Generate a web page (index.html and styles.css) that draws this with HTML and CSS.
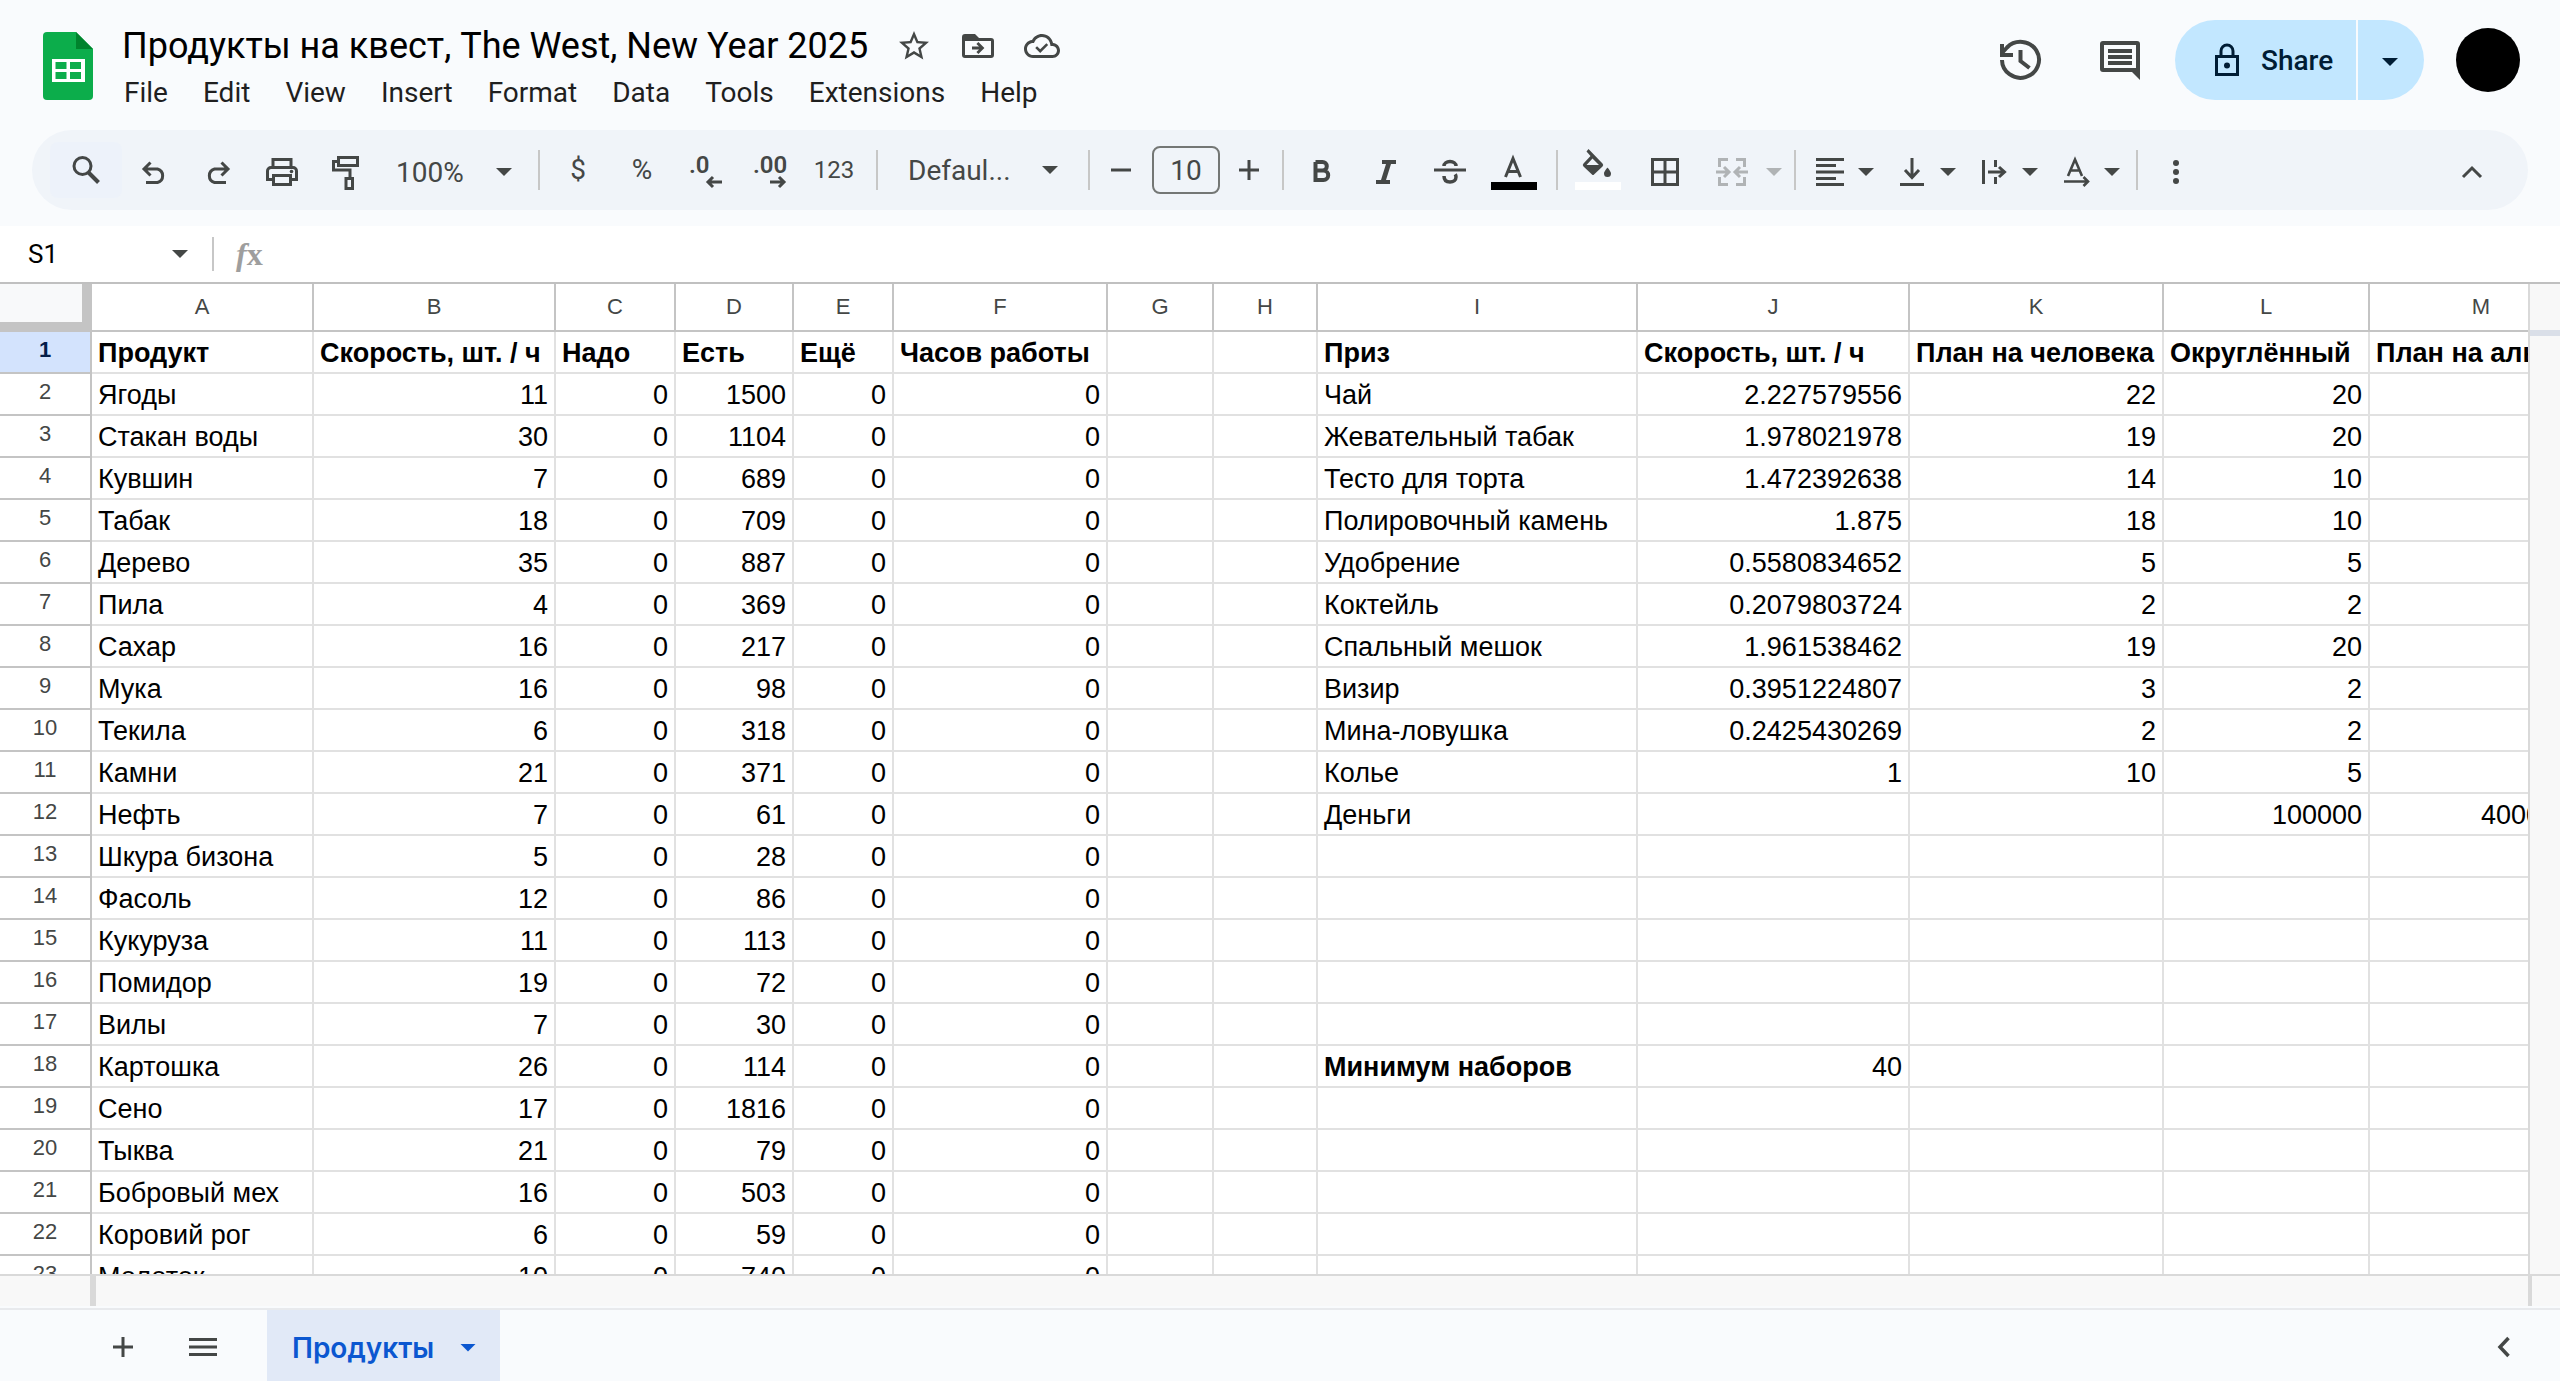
FILE: index.html
```html
<!DOCTYPE html>
<html lang="en">
<head>
<meta charset="utf-8">
<title>Продукты на квест, The West, New Year 2025</title>
<link rel="stylesheet" href="styles.css">
</head>
<body>
<div class="app">
  <header class="header">
    <a class="logo" href="#" aria-label="Sheets home">
      <svg width="50" height="68" viewBox="0 0 50 68"><path fill="#0cad4b" d="M4 0h29l17 17v47a4 4 0 0 1-4 4H4a4 4 0 0 1-4-4V4a4 4 0 0 1 4-4z"/><path fill="#00832d" d="M33 0l17 17H33z"/><path fill="#fff" fill-rule="evenodd" d="M9 27h33v23H9zM12.500 30v7h11v-7zM27 30v7h11v-7zM12.500 40v7h11v-7zM27 40v7h11v-7z"/></svg>
    </a>
    <div class="heading">
      <div class="title-row">
        <h1 class="title">Продукты на квест, The West, New Year 2025</h1>
        <button class="title-button" aria-label="Star"><svg width="36" height="36" viewBox="0 0 24 24"><path d="M22 9.240l-7.190-.620L12 2 9.190 8.630 2 9.240l5.460 4.730L5.820 21 12 17.270 18.180 21l-1.630-7.030L22 9.240zM12 15.400l-3.760 2.270 1-4.280-3.320-2.880 4.380-.380L12 6.100l1.710 4.040 4.380.380-3.320 2.880 1 4.280L12 15.400z"/></svg></button>
        <button class="title-button" aria-label="Move"><svg width="36" height="36" viewBox="0 0 36 36"><path fill-rule="evenodd" d="M5 6h10l4 4h12a3 3 0 0 1 3 3v14a3 3 0 0 1-3 3H5a3 3 0 0 1-3-3V9a3 3 0 0 1 3-3zM5 13v14h26V13z"/><path d="M12 18.500h7l-2.600-2.500 2-2 6 6-6 6-2-2 2.600-2.500h-7z"/></svg></button>
        <button class="title-button" aria-label="Saved to Drive"><svg width="36" height="36" viewBox="0 0 24 24"><path d="M19.350 10.040C18.670 6.590 15.640 4 12 4 9.110 4 6.600 5.640 5.350 8.040 2.340 8.360 0 10.910 0 14c0 3.310 2.690 6 6 6h13c2.760 0 5-2.240 5-5 0-2.640-2.050-4.780-4.650-4.960zM19 18H6c-2.210 0-4-1.790-4-4 0-2.050 1.530-3.760 3.560-3.970l1.070-.110.500-.950C8.080 7.140 9.940 6 12 6c2.620 0 4.880 1.860 5.390 4.430l.300 1.500 1.530.110c1.560.100 2.780 1.410 2.780 2.960 0 1.650-1.350 3-3 3z"/><path d="M10.800 16.600l-3.300-3.200 1.200-1.200 2.100 2 4.100-4.100 1.200 1.200z"/></svg></button>
      </div>
      <nav class="menus">
        <button>File</button><button>Edit</button><button>View</button><button>Insert</button><button>Format</button><button>Data</button><button>Tools</button><button>Extensions</button><button>Help</button>
      </nav>
    </div>
    <div class="account">
      <button class="round-button" aria-label="Version history"><svg width="44" height="44" viewBox="0 0 44 44"><path class="line" stroke-width="4" d="M4 22a18.500 18 0 1 0 5-12.500L4 15M4 6v11h11"/><path class="line" stroke-width="4" d="M22.500 12v11l9 7"/></svg></button>
      <button class="round-button" aria-label="Comments"><svg width="40" height="40" viewBox="0 0 40 40"><path fill-rule="evenodd" d="M3 1h34a3 3 0 0 1 3 3v36l-8-8H3a3 3 0 0 1-3-3V4a3 3 0 0 1 3-3zM4 5v23h32V5z"/><path d="M8 9h24v4H8zM8 15h24v4H8zM8 21h24v4H8z"/></svg></button>
      <div class="share">
        <button class="share-main"><svg width="24" height="34" viewBox="0 0 24 34"><path class="line" stroke-width="3" d="M1.500 13.500h21v18h-21zM6 13V8a6 6 0 0 1 12 0v5"/><circle cx="12" cy="22.500" r="3"/></svg>Share</button>
        <button class="share-more" aria-label="Share options"><span class="caret"></span></button>
      </div>
      <button class="avatar" aria-label="Account"></button>
    </div>
  </header>

  <div class="toolbar" role="toolbar">
    <button class="tool search" aria-label="Search menus"><svg width="28" height="40" viewBox="0 0 28 40"><circle class="line" stroke-width="3" cx="10.500" cy="16" r="8.500"/><path class="line" stroke-width="4" d="M16 22l10.500 10.500"/></svg></button>
    <button class="tool" aria-label="Undo"><svg width="24" height="40" viewBox="0 0 24 40"><path class="line" stroke-width="3" d="M4 32.500h11.500a7 7 0 0 0 0-13.500H3M8.500 12.500L2 19l6.500 6.500"/></svg></button>
    <button class="tool" aria-label="Redo"><svg width="24" height="40" viewBox="0 0 24 40"><path class="line" stroke-width="3" d="M20 32.500H8.500a7 7 0 0 1 0-13.500H21M15.500 12.500L22 19l-6.500 6.500"/></svg></button>
    <button class="tool" aria-label="Print"><svg width="32" height="40" viewBox="0 0 32 40"><path class="line" stroke-width="3" d="M7 17V9.500h18V17M7 29.500H1.500V21a3.500 3.500 0 0 1 3.500-3.500h22a3.500 3.500 0 0 1 3.500 3.500v8.500H25M7.500 25.500h17v9h-17z"/><circle cx="25.500" cy="21.500" r="1.800"/></svg></button>
    <button class="tool" aria-label="Paint format"><svg width="28" height="40" viewBox="0 0 28 40"><path class="line" stroke-width="3" d="M6.500 7.500h19v8h-19zM6 11.500H1.500V20h16.500v7M14 28.500h6.500v10H14z"/></svg></button>
    <button class="tool zoom">100%<span class="caret"></span></button>
    <span class="rule"></span>
    <button class="tool low">$</button>
    <button class="tool low">%</button>
    <button class="tool decimals" aria-label="Decrease decimal places">.0<svg class="under" width="16" height="12" viewBox="0 0 16 12"><path class="line" stroke-width="3" d="M16 6H2M7 1L2 6l5 5"/></svg></button>
    <button class="tool decimals" aria-label="Increase decimal places">.00<svg class="under" width="16" height="12" viewBox="0 0 16 12"><path class="line" stroke-width="3" d="M0 6h14M9 1l5 5-5 5"/></svg></button>
    <button class="tool small">123</button>
    <span class="rule"></span>
    <button class="tool family">Defaul...<span class="caret"></span></button>
    <span class="rule"></span>
    <button class="tool minus" aria-label="Decrease font size"><svg width="20" height="40" viewBox="0 0 20 40"><path d="M0 18.500h20v3H0z"/></svg></button>
    <input class="size" aria-label="Font size" value="10">
    <button class="tool plus" aria-label="Increase font size"><svg width="20" height="40" viewBox="0 0 20 40"><path d="M0 18.500h8.500V10h3v8.500H20v3h-8.500V30h-3v-8.500H0z"/></svg></button>
    <span class="rule"></span>
    <button class="tool" aria-label="Bold"><svg width="18" height="40" viewBox="0 0 18 40"><path class="line" stroke-width="4" d="M2.500 12h7a4.300 4.300 0 0 1 0 8.600h-7M2.500 20.600h8a4.700 4.700 0 0 1 0 9.400h-8zM2.500 12v18"/></svg></button>
    <button class="tool" aria-label="Italic"><svg width="20" height="40" viewBox="0 0 20 40"><path d="M6 10h14v4h-5l-5 16h4v4H0v-4h5l5-16H6z"/></svg></button>
    <button class="tool" aria-label="Strikethrough"><svg width="32" height="40" viewBox="0 0 32 40"><path d="M0 18.500h32v3H0z"/><path class="line" stroke-width="3.500" d="M22 16c0-2.500-2.500-4.500-6-4.500s-6 2-6 4.500M10 26c0 4 2.500 6 6 6s6-2 6-5c0-1-.3-2-.8-2.800"/></svg></button>
    <button class="tool" aria-label="Text color"><svg width="46" height="40" viewBox="0 0 46 40"><path class="line" stroke-width="3" d="M14.500 27L22 8.500 29.500 27M17 21.500h10"/><path fill="#000" d="M0 32h46v8H0z"/></svg></button>
    <span class="rule"></span>
    <button class="tool wide" aria-label="Fill color"><svg width="46" height="40" viewBox="0 0 46 40"><path fill-rule="evenodd" d="M13.500-1l14 14.500q1.500 1.500 0 3L19 24.500q-1 1-2 0l-8.500-8q-1.500-1.500 0-3L15.500 6l-4-4.500zM17.500 8.500L11.500 15H24z"/><path d="M32.500 17.500s3.500 3.800 3.500 6a3.500 3.500 0 0 1-7 0c0-2.200 3.500-6 3.500-6z"/><path fill="#fff" d="M0 32h46v8H0z"/></svg></button>
    <button class="tool wide" aria-label="Borders"><svg width="28" height="40" viewBox="0 0 28 40"><path class="line" stroke-width="3" d="M1.500 9.500h25v25h-25zM14 9v26M1 22h26"/></svg></button>
    <button class="tool merge" disabled aria-label="Merge cells"><svg width="32" height="40" viewBox="0 0 32 40"><path class="line" stroke-width="3" d="M12 9.500H3.500V17M20 9.500h8.500V17M12 34.500H3.500V27M20 34.500h8.500V27M0 22h12M8 17l5 5-5 5M32 22H20M24 17l-5 5 5 5"/></svg><span class="caret"></span></button>
    <span class="rule"></span>
    <button class="tool drop" aria-label="Horizontal align"><svg width="28" height="40" viewBox="0 0 28 40"><path d="M0 8h28v3H0zM0 14h20v3H0zM0 20.500h28v3H0zM0 27h20v3H0zM0 33h28v3H0z"/></svg><span class="caret"></span></button>
    <button class="tool drop" aria-label="Vertical align"><svg width="28" height="40" viewBox="0 0 28 40"><path class="line" stroke-width="3" d="M2 34.500h24M14 8v19M7 20l7 7.500 7-7.500"/></svg><span class="caret"></span></button>
    <button class="tool drop" aria-label="Text wrapping"><svg width="28" height="40" viewBox="0 0 28 40"><path class="line" stroke-width="3" d="M3.500 10v24M15.500 10v7M15.500 27v7M8 22h16M19 17l5.500 5-5.500 5"/></svg><span class="caret"></span></button>
    <button class="tool drop" aria-label="Text rotation"><svg width="28" height="40" viewBox="0 0 28 40"><path class="line" stroke-width="2.600" d="M6 26L13 9.500 20 26M8.500 20.500h9M2 31.500h23M21.500 27l4.500 4.500-4.500 4.500"/></svg><span class="caret"></span></button>
    <span class="rule near"></span>
    <button class="tool" aria-label="More"><svg width="8" height="40" viewBox="0 0 8 40"><circle cx="4" cy="13" r="3"/><circle cx="4" cy="22" r="3"/><circle cx="4" cy="31" r="3"/></svg></button>
    <button class="tool last" aria-label="Hide the menus"><svg width="20" height="40" viewBox="0 0 20 40"><path class="line" stroke-width="3" d="M1 27l9-9 9 9"/></svg></button>
  </div>

  <div class="formula">
    <label class="name-box"><input aria-label="Name box" value="S1"><span class="caret"></span></label>
    <span class="fx"><i>f</i>x</span>
    <input class="formula-input" aria-label="Formula bar">
  </div>

  <main class="sheet">
    <div class="grid">
      <table>
        <colgroup><col class="w-head"><col class="w-a"><col class="w-b"><col class="w-c"><col class="w-d"><col class="w-e"><col class="w-f"><col class="w-g"><col class="w-h"><col class="w-i"><col class="w-j"><col class="w-k"><col class="w-l"><col class="w-m"></colgroup>
        <thead>
          <tr><td class="corner"></td><th>A</th><th>B</th><th>C</th><th>D</th><th>E</th><th>F</th><th>G</th><th>H</th><th>I</th><th>J</th><th>K</th><th>L</th><th>M</th></tr>
        </thead>
        <tbody>
          <tr class="titles"><th>1</th><td>Продукт</td><td>Скорость, шт. / ч</td><td>Надо</td><td>Есть</td><td>Ещё</td><td>Часов работы</td><td></td><td></td><td>Приз</td><td>Скорость, шт. / ч</td><td>План на человека</td><td>Округлённый</td><td>План на альянс</td></tr>
          <tr><th>2</th><td>Ягоды</td><td>11</td><td>0</td><td>1500</td><td>0</td><td>0</td><td></td><td></td><td>Чай</td><td>2.227579556</td><td>22</td><td>20</td><td></td></tr>
          <tr><th>3</th><td>Стакан воды</td><td>30</td><td>0</td><td>1104</td><td>0</td><td>0</td><td></td><td></td><td>Жевательный табак</td><td>1.978021978</td><td>19</td><td>20</td><td></td></tr>
          <tr><th>4</th><td>Кувшин</td><td>7</td><td>0</td><td>689</td><td>0</td><td>0</td><td></td><td></td><td>Тесто для торта</td><td>1.472392638</td><td>14</td><td>10</td><td></td></tr>
          <tr><th>5</th><td>Табак</td><td>18</td><td>0</td><td>709</td><td>0</td><td>0</td><td></td><td></td><td>Полировочный камень</td><td>1.875</td><td>18</td><td>10</td><td></td></tr>
          <tr><th>6</th><td>Дерево</td><td>35</td><td>0</td><td>887</td><td>0</td><td>0</td><td></td><td></td><td>Удобрение</td><td>0.5580834652</td><td>5</td><td>5</td><td></td></tr>
          <tr><th>7</th><td>Пила</td><td>4</td><td>0</td><td>369</td><td>0</td><td>0</td><td></td><td></td><td>Коктейль</td><td>0.2079803724</td><td>2</td><td>2</td><td></td></tr>
          <tr><th>8</th><td>Сахар</td><td>16</td><td>0</td><td>217</td><td>0</td><td>0</td><td></td><td></td><td>Спальный мешок</td><td>1.961538462</td><td>19</td><td>20</td><td></td></tr>
          <tr><th>9</th><td>Мука</td><td>16</td><td>0</td><td>98</td><td>0</td><td>0</td><td></td><td></td><td>Визир</td><td>0.3951224807</td><td>3</td><td>2</td><td></td></tr>
          <tr><th>10</th><td>Текила</td><td>6</td><td>0</td><td>318</td><td>0</td><td>0</td><td></td><td></td><td>Мина-ловушка</td><td>0.2425430269</td><td>2</td><td>2</td><td></td></tr>
          <tr><th>11</th><td>Камни</td><td>21</td><td>0</td><td>371</td><td>0</td><td>0</td><td></td><td></td><td>Колье</td><td>1</td><td>10</td><td>5</td><td></td></tr>
          <tr><th>12</th><td>Нефть</td><td>7</td><td>0</td><td>61</td><td>0</td><td>0</td><td></td><td></td><td>Деньги</td><td></td><td></td><td>100000</td><td>4000000</td></tr>
          <tr><th>13</th><td>Шкура бизона</td><td>5</td><td>0</td><td>28</td><td>0</td><td>0</td><td></td><td></td><td></td><td></td><td></td><td></td><td></td></tr>
          <tr><th>14</th><td>Фасоль</td><td>12</td><td>0</td><td>86</td><td>0</td><td>0</td><td></td><td></td><td></td><td></td><td></td><td></td><td></td></tr>
          <tr><th>15</th><td>Кукуруза</td><td>11</td><td>0</td><td>113</td><td>0</td><td>0</td><td></td><td></td><td></td><td></td><td></td><td></td><td></td></tr>
          <tr><th>16</th><td>Помидор</td><td>19</td><td>0</td><td>72</td><td>0</td><td>0</td><td></td><td></td><td></td><td></td><td></td><td></td><td></td></tr>
          <tr><th>17</th><td>Вилы</td><td>7</td><td>0</td><td>30</td><td>0</td><td>0</td><td></td><td></td><td></td><td></td><td></td><td></td><td></td></tr>
          <tr><th>18</th><td>Картошка</td><td>26</td><td>0</td><td>114</td><td>0</td><td>0</td><td></td><td></td><td><b>Минимум наборов</b></td><td>40</td><td></td><td></td><td></td></tr>
          <tr><th>19</th><td>Сено</td><td>17</td><td>0</td><td>1816</td><td>0</td><td>0</td><td></td><td></td><td></td><td></td><td></td><td></td><td></td></tr>
          <tr><th>20</th><td>Тыква</td><td>21</td><td>0</td><td>79</td><td>0</td><td>0</td><td></td><td></td><td></td><td></td><td></td><td></td><td></td></tr>
          <tr><th>21</th><td>Бобровый мех</td><td>16</td><td>0</td><td>503</td><td>0</td><td>0</td><td></td><td></td><td></td><td></td><td></td><td></td><td></td></tr>
          <tr><th>22</th><td>Коровий рог</td><td>6</td><td>0</td><td>59</td><td>0</td><td>0</td><td></td><td></td><td></td><td></td><td></td><td></td><td></td></tr>
          <tr><th>23</th><td>Молоток</td><td>10</td><td>0</td><td>740</td><td>0</td><td>0</td><td></td><td></td><td></td><td></td><td></td><td></td><td></td></tr>
        </tbody>
      </table>
    </div>
    <div class="scroll-y"></div>
  </main>
  <div class="scroll-x"></div>

  <footer class="tabs">
    <button class="tab-tool add" aria-label="Add sheet"><svg width="20" height="20" viewBox="0 0 20 20"><path d="M0 8.500h8.500V0h3v8.500H20v3h-8.500V20h-3v-8.500H0z"/></svg></button>
    <button class="tab-tool all" aria-label="All sheets"><svg width="28" height="18" viewBox="0 0 28 18"><path d="M0 0h28v3H0zM0 7.500h28v3H0zM0 15h28v3H0z"/></svg></button>
    <button class="tab">Продукты<span class="caret"></span></button>
    <button class="tab-tool panel" aria-label="Show side panel"><svg width="12" height="20" viewBox="0 0 12 20"><path class="line" stroke-width="3.500" d="M10.500 1L2 10l8.500 9"/></svg></button>
  </footer>
</div>
</body>
</html>
```
FILE: styles.css
```css
* { box-sizing: border-box; }

body {
  margin: 0;
  font-family: Roboto, "Liberation Sans", sans-serif;
  font-size: 28px;
  color: #444746;
  background: #f9fbfd;
}

button, input {
  margin: 0;
  padding: 0;
  border: 0;
  background: none;
  font: inherit;
  color: inherit;
}

svg {
  display: block;
  flex: none;
  fill: currentColor;
  overflow: visible;
}

.line { fill: none; stroke: currentColor; }

.caret {
  flex: none;
  width: 16px;
  height: 8px;
  background: currentColor;
  clip-path: polygon(0 0, 100% 0, 50% 100%);
}

.app {
  display: flex;
  flex-direction: column;
  height: 100vh;
  overflow: hidden;
}

/* Header */
.header {
  display: flex;
  flex: none;
  height: 130px;
  padding: 0 40px 0 43px;
}

.logo { padding-top: 32px; }

.heading { padding: 24px 0 0 29px; }

.title-row { display: flex; align-items: center; height: 44px; }

.title {
  margin: 0 14px 0 0;
  font-size: 36px;
  font-weight: 400;
  line-height: 44px;
  color: #000;
  white-space: nowrap;
}

.title-button { width: 64px; padding: 0 14px; }

.menus { display: flex; gap: 35px; padding: 9px 0 0 2px; }

.menus button { line-height: 32px; color: #1f1f1f; }

.account {
  display: flex;
  align-items: center;
  height: 80px;
  margin: 20px 0 0 auto;
}

.round-button {
  display: grid;
  place-items: center;
  width: 100px;
  height: 80px;
}

.share {
  display: flex;
  gap: 2px;
  height: 80px;
  margin: 0 32px 0 5px;
  border-radius: 40px;
  overflow: hidden;
  color: #001d35;
}

.share button { background: #c2e7ff; }

.share-main {
  display: flex;
  align-items: center;
  gap: 22px;
  width: 181px;
  padding-left: 40px;
  font-weight: 500;
}

.share-more { width: 66px; padding: 4px 0 0 24px; }

.share-more .caret { display: block; }

.avatar { width: 64px; height: 64px; border-radius: 50%; background: #000; }

/* Toolbar */
.toolbar {
  display: flex;
  flex: none;
  align-items: center;
  height: 80px;
  margin: 0 32px 16px;
  padding: 0 24px 0 18px;
  border-radius: 40px;
  background: #f0f4f9;
}

.tool {
  display: flex;
  flex: none;
  align-items: center;
  justify-content: center;
  width: 64px;
  height: 56px;
}

.tool .caret { margin-top: 4px; }

.search { width: 72px; border-radius: 8px; background: #edf2fa; }

.zoom {
  justify-content: space-between;
  width: 150px;
  padding: 4px 16px 0 18px;
}

.zoom .caret { margin-top: 0; }

.low { padding-bottom: 2px; }

.small { font-size: 24px; }

.decimals {
  position: relative;
  justify-content: flex-start;
  padding: 0 0 10px 15px;
  font-size: 24px;
  font-weight: 600;
}

.under { position: absolute; right: 16px; bottom: 10px; }

.family { justify-content: space-between; width: 194px; padding: 0 20px 0 24px; }

.family .caret { margin-top: 0; }

.minus { width: 50px; }

.plus { width: 46px; }

.size {
  width: 68px;
  height: 48px;
  margin: 0 6px;
  border: 2px solid #747775;
  border-radius: 8px;
  text-align: center;
}

.rule {
  flex: none;
  width: 2px;
  height: 40px;
  margin: 0 6px 0 10px;
  background: #c7c7c7;
}

.near { margin-left: 6px; }

.wide { width: 67px; }

.merge {
  justify-content: space-between;
  width: 86px;
  padding: 0 2px 0 18px;
  color: #b0b3b5;
}

.drop { justify-content: space-between; width: 82px; padding: 0 10px 0 14px; }

.last { margin-left: auto; }

/* Formula bar */
.formula {
  display: flex;
  flex: none;
  align-items: center;
  height: 56px;
  background: #fff;
}

.name-box {
  display: flex;
  align-items: center;
  width: 214px;
  height: 34px;
  padding: 0 24px 0 28px;
  border-right: 2px solid #c7c7c7;
}

.name-box input { flex: 1; min-width: 0; font-size: 26px; color: #000; }

.fx {
  width: 70px;
  padding-left: 22px;
  font: bold 32px/34px "Liberation Serif", serif;
  color: #9e9e9e;
}

.formula-input { flex: 1; height: 100%; }

/* Grid */
.sheet {
  display: flex;
  flex: 1;
  min-height: 0;
  border-top: 2px solid #c0c0c0;
  border-bottom: 2px solid #d9d9d9;
  background: #fff;
}

.grid { flex: 1; min-width: 0; overflow: hidden; }

table {
  width: 2594px;
  table-layout: fixed;
  border-collapse: separate;
  border-spacing: 0;
  font-family: "Liberation Sans", Arial, sans-serif;
}

th {
  padding: 6px 0 10px;
  border: solid #c4c4c4;
  border-width: 0 2px 2px 0;
  font-size: 22px;
  font-weight: 400;
  line-height: 24px;
}

thead th { padding: 11px 0; }

.corner {
  padding: 0;
  border: solid #c4c4c4;
  border-width: 0 10px 10px 0;
  background: #f8f9fa;
}

tbody td {
  padding: 6px 6px 4px;
  border: solid #e1e1e1;
  border-width: 0 2px 2px 0;
  font-size: 27px;
  line-height: 30px;
  color: #000;
  text-align: right;
  white-space: nowrap;
  overflow: hidden;
}

tbody td:nth-child(2), tbody td:nth-child(10) { text-align: left; }

.titles td { font-weight: 700; text-align: left; }

.titles th { background: #d3e3fd; color: #041e49; font-weight: 700; }

.w-head { width: 92px; }
.w-a { width: 222px; }
.w-b { width: 242px; }
.w-c { width: 120px; }
.w-d { width: 118px; }
.w-e { width: 100px; }
.w-f { width: 214px; }
.w-g { width: 106px; }
.w-h { width: 104px; }
.w-i { width: 320px; }
.w-j { width: 272px; }
.w-k { width: 254px; }
.w-l { width: 206px; }
.w-m { width: 224px; }

.scroll-y {
  width: 32px;
  padding-top: 46px;
  border-left: 2px solid #d9d9d9;
  background: #f8f8f8;
}

.scroll-y::before {
  content: "";
  display: block;
  height: 6px;
  background: #dadfe8;
}

.scroll-x {
  display: flex;
  flex: none;
  justify-content: space-between;
  height: 30px;
  margin-bottom: 2px;
  padding: 0 28px 0 90px;
  background: #f8f8f8;
}

.scroll-x::before, .scroll-x::after {
  content: "";
  width: 6px;
  background: #d9d9d9;
}

.scroll-x::after { width: 4px; }

/* Sheet tabs */
.tabs {
  display: flex;
  flex: none;
  height: 73px;
  border-top: 2px solid #e8eaed;
}

.tab-tool { display: grid; place-items: center; width: 80px; padding-top: 3px; }

.add { margin-left: 83px; }

.tab {
  display: flex;
  align-items: center;
  justify-content: space-between;
  width: 233px;
  margin-left: 24px;
  padding: 4px 24px 0 25px;
  background: #e1e9f7;
  color: #0b57d0;
  font-family: Inter, Roboto, sans-serif;
  font-size: 28px;
  font-weight: 600;
}

.panel { width: 40px; margin: 0 36px 0 auto; }
```
